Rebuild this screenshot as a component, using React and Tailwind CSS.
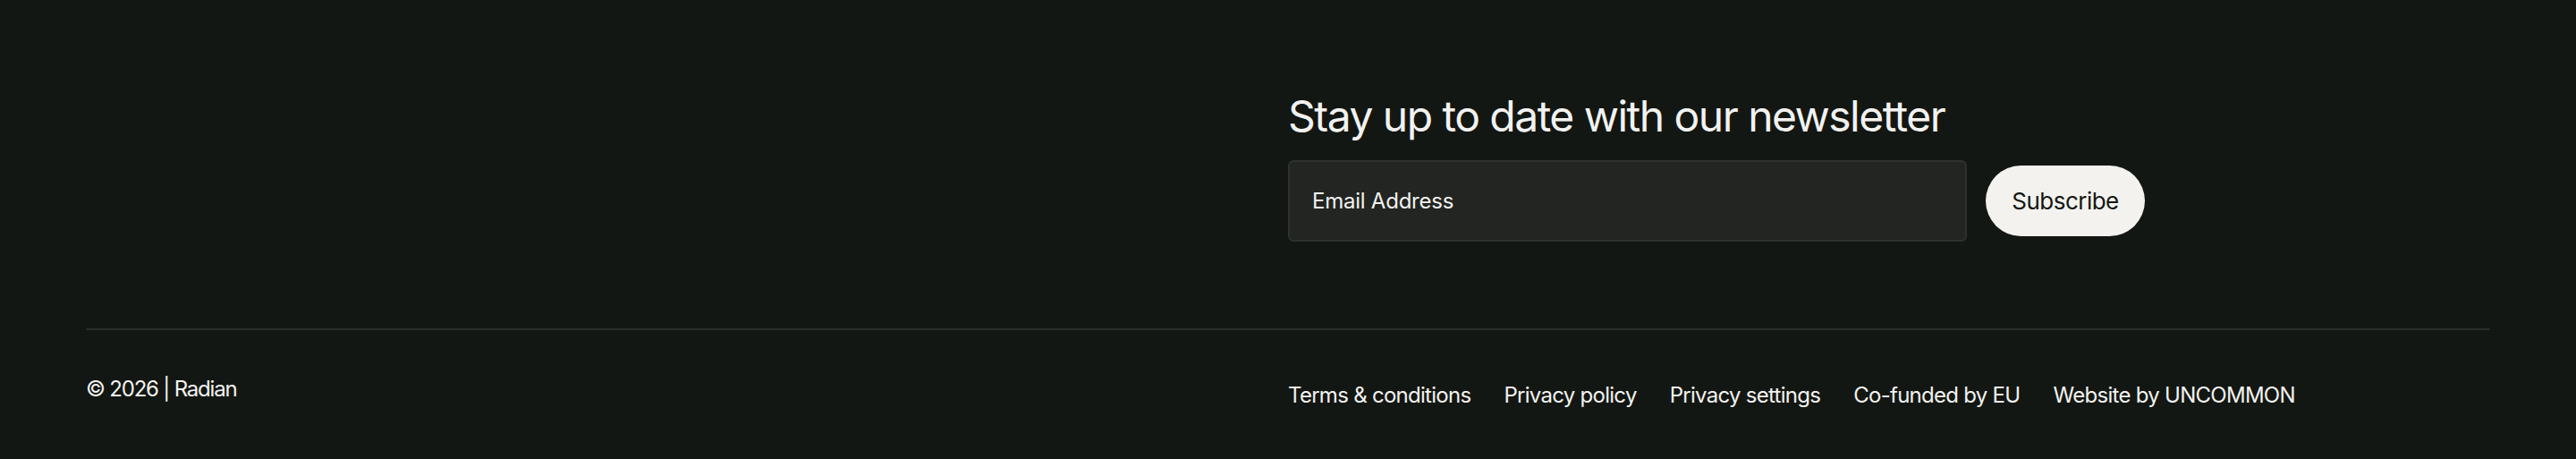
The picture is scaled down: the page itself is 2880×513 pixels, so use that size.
import React from 'react';

const links = ['Terms & conditions', 'Privacy policy', 'Privacy settings', 'Co-funded by EU', 'Website by UNCOMMON'];

const App = () => {
  return (
    <div
      className="min-h-[513px] bg-[#131714] px-[96px] pt-[101px] text-[#f3f2ee]"
      style={{ fontFamily: 'Inter, "Noto Sans", sans-serif' }}
    >
      <div className="grid grid-cols-2">
        <div />
        <div>
          <h2 className="text-[48px] leading-[58px] tracking-[-0.032em] font-normal">
            Stay up to date with our newsletter
          </h2>
          <form className="mt-[20px] flex items-center gap-[21px]" onSubmit={(e) => e.preventDefault()}>
            <input
              type="email"
              placeholder="Email Address"
              className="h-[91px] w-[759px] rounded-[6px] border-2 border-[#2e312e] bg-[#222522] px-[25px] text-[24px] tracking-[-0.01em] text-[#f3f2ee] placeholder:text-[#f3f2ee] outline-none"
            />
            <button
              type="submit"
              className="h-[79px] w-[178px] rounded-full bg-[#f3f2ee] text-[26px] tracking-[-0.02em] text-[#131714]"
            >
              Subscribe
            </button>
          </form>
        </div>
      </div>

      <div className="mt-[97px] border-t-2 border-[#2b2e2b] grid grid-cols-2 pt-[50px] text-[24px] tracking-[-0.03em]">
        <p className="leading-[32px] tracking-[-0.05em]">© 2026 | Radian</p>
        <nav className="flex gap-[37px] pt-[7px] leading-[32px]">
          {links.map((l) => (
            <a key={l} href="#" className="whitespace-nowrap">
              {l}
            </a>
          ))}
        </nav>
      </div>
    </div>
  );
};

export default App;
